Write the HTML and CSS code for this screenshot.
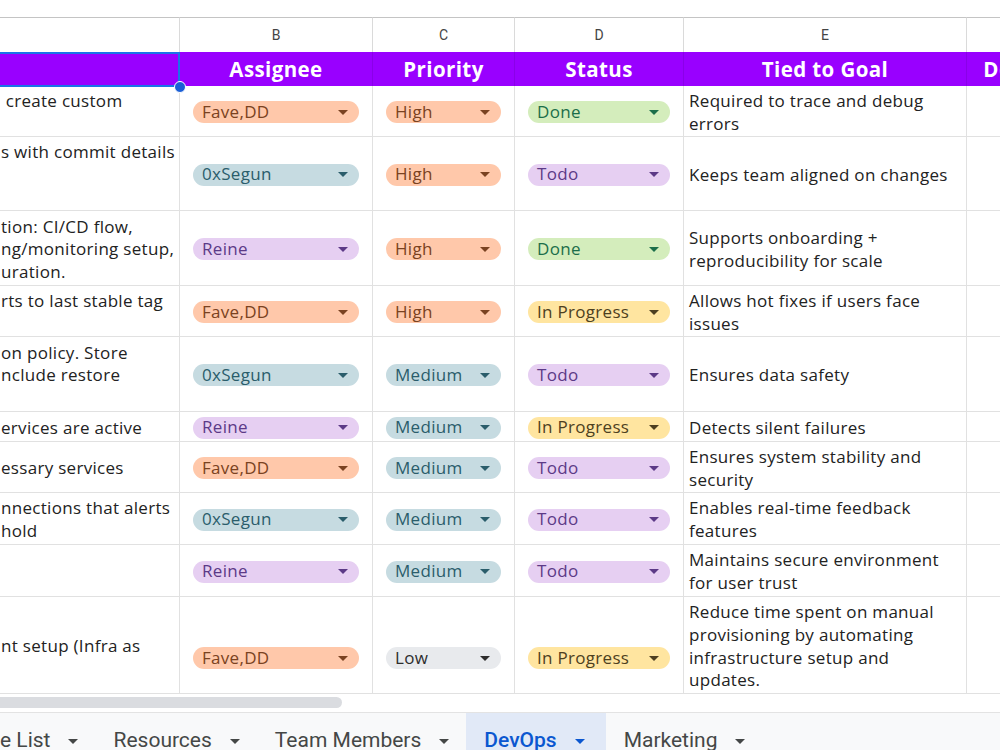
FILE: index.html
```html
<!DOCTYPE html>
<html lang="en">
<head>
  <meta charset="UTF-8">
  <meta name="viewport" content="width=device-width, initial-scale=1.0">
  <title>DevOps - Task Tracker</title>
  <link rel="stylesheet" href="styles.css">
</head>
<body>

  <div class="sheet">
    <div class="grid">
      <!-- Column letters -->
      <div class="letter"></div>
      <div class="letter">B</div>
      <div class="letter">C</div>
      <div class="letter">D</div>
      <div class="letter">E</div>
      <div class="letter"></div>

      <!-- Header row -->
      <div class="head selected"></div>
      <div class="head">Assignee</div>
      <div class="head">Priority</div>
      <div class="head">Status</div>
      <div class="head">Tied to Goal</div>
      <div class="head">Dependencies</div>

      <!-- Row 1 -->
      <div class="cell task">&nbsp;create custom<br>&nbsp;</div>
      <div class="cell pick"><span class="chip orange">Fave,DD</span></div>
      <div class="cell pick"><span class="chip orange">High</span></div>
      <div class="cell pick"><span class="chip green">Done</span></div>
      <div class="cell goal">Required to trace and debug<br>errors</div>
      <div class="cell"></div>

      <!-- Row 2 -->
      <div class="cell task">s with commit details<br>&nbsp;<br>&nbsp;</div>
      <div class="cell pick"><span class="chip teal">0xSegun</span></div>
      <div class="cell pick"><span class="chip orange">High</span></div>
      <div class="cell pick"><span class="chip purple">Todo</span></div>
      <div class="cell goal">Keeps team aligned on changes</div>
      <div class="cell"></div>

      <!-- Row 3 -->
      <div class="cell task">tion: CI/CD flow,<br>ng/monitoring setup,<br>uration.</div>
      <div class="cell pick"><span class="chip purple">Reine</span></div>
      <div class="cell pick"><span class="chip orange">High</span></div>
      <div class="cell pick"><span class="chip green">Done</span></div>
      <div class="cell goal">Supports onboarding +<br>reproducibility for scale</div>
      <div class="cell"></div>

      <!-- Row 4 -->
      <div class="cell task">rts to last stable tag<br>&nbsp;</div>
      <div class="cell pick"><span class="chip orange">Fave,DD</span></div>
      <div class="cell pick"><span class="chip orange">High</span></div>
      <div class="cell pick"><span class="chip yellow">In Progress</span></div>
      <div class="cell goal">Allows hot fixes if users face<br>issues</div>
      <div class="cell"></div>

      <!-- Row 5 -->
      <div class="cell task">on policy. Store<br>nclude restore<br>&nbsp;</div>
      <div class="cell pick"><span class="chip teal">0xSegun</span></div>
      <div class="cell pick"><span class="chip teal">Medium</span></div>
      <div class="cell pick"><span class="chip purple">Todo</span></div>
      <div class="cell goal">Ensures data safety</div>
      <div class="cell"></div>

      <!-- Row 6 -->
      <div class="cell task">ervices are active</div>
      <div class="cell pick"><span class="chip purple">Reine</span></div>
      <div class="cell pick"><span class="chip teal">Medium</span></div>
      <div class="cell pick"><span class="chip yellow">In Progress</span></div>
      <div class="cell goal">Detects silent failures</div>
      <div class="cell"></div>

      <!-- Row 7 -->
      <div class="cell task">essary services</div>
      <div class="cell pick"><span class="chip orange">Fave,DD</span></div>
      <div class="cell pick"><span class="chip teal">Medium</span></div>
      <div class="cell pick"><span class="chip purple">Todo</span></div>
      <div class="cell goal">Ensures system stability and<br>security</div>
      <div class="cell"></div>

      <!-- Row 8 -->
      <div class="cell task">nnections that alerts<br>hold</div>
      <div class="cell pick"><span class="chip teal">0xSegun</span></div>
      <div class="cell pick"><span class="chip teal">Medium</span></div>
      <div class="cell pick"><span class="chip purple">Todo</span></div>
      <div class="cell goal">Enables real-time feedback<br>features</div>
      <div class="cell"></div>

      <!-- Row 9 -->
      <div class="cell task"></div>
      <div class="cell pick"><span class="chip purple">Reine</span></div>
      <div class="cell pick"><span class="chip teal">Medium</span></div>
      <div class="cell pick"><span class="chip purple">Todo</span></div>
      <div class="cell goal">Maintains secure environment<br>for user trust</div>
      <div class="cell"></div>

      <!-- Row 10 -->
      <div class="cell task">nt setup (Infra as</div>
      <div class="cell pick low"><span class="chip orange">Fave,DD</span></div>
      <div class="cell pick low"><span class="chip gray">Low</span></div>
      <div class="cell pick low"><span class="chip yellow">In Progress</span></div>
      <div class="cell goal">Reduce time spent on manual<br>provisioning by automating<br>infrastructure setup and<br>updates.</div>
      <div class="cell"></div>
    </div>

    <div class="scrollbar">
      <div class="thumb"></div>
    </div>
  </div>

  <!-- Sheet tabs -->
  <div class="tabs">
    <div class="tab first">e List<span class="caret"></span></div>
    <div class="tab">Resources<span class="caret"></span></div>
    <div class="tab">Team Members<span class="caret"></span></div>
    <div class="tab active">DevOps<span class="caret"></span></div>
    <div class="tab">Marketing<span class="caret"></span></div>
  </div>

</body>
</html>
```

FILE: styles.css
```css
body {
  margin: 0;
  width: 1000px;
  height: 750px;
  overflow: hidden;
  background-color: #fff;
  font-family: "Open Sans", Arial, sans-serif;
  color: #222;
}

.sheet {
  padding-top: 17px;
  overflow: hidden;
}

.grid {
  display: grid;
  grid-template-columns: 180px 193px 142px 169px 283px 182px;
  grid-template-rows: 35px 34px 51px 74px 75px 51px 75px 30px 51px 52px 52px 97px;
  width: 1149px;
}

.grid > div {
  box-sizing: border-box;
  min-width: 0;
}

/* Column letters row */
.letter {
  display: flex;
  justify-content: center;
  align-items: center;
  border-top: 1px solid #c4c4c4;
  border-right: 1px solid #dadada;
  font-family: Roboto, Arial, sans-serif;
  font-size: 14px;
  color: #444;
}

/* Purple header row */
.head {
  display: flex;
  justify-content: center;
  align-items: center;
  background-color: #9900ff;
  border-right: 1px solid #8a00e8;
  color: #fff;
  font-size: 20.5px;
  font-weight: 700;
  letter-spacing: 0.4px;
  white-space: nowrap;
  overflow: hidden;
}

.head.selected {
  position: relative;
  overflow: visible;
}

.head.selected::before {
  content: "";
  position: absolute;
  top: 0;
  left: -2px;
  right: -1px;
  bottom: -1px;
  border: 2px solid #1a73e8;
}

.head.selected::after {
  content: "";
  position: absolute;
  right: -7px;
  bottom: -7px;
  width: 10px;
  height: 10px;
  border-radius: 50%;
  background-color: #1a5fd6;
  border: 1px solid #fff;
  z-index: 2;
}

/* Data cells */
.cell {
  display: flex;
  align-items: center;
  border-right: 1px solid #e1e1e1;
  border-bottom: 1px solid #e1e1e1;
  font-size: 17px;
  letter-spacing: 0.3px;
  line-height: 22.6px;
  white-space: nowrap;
  overflow: hidden;
}

.task {
  padding: 3px 0 0 1px;
}

.goal {
  padding: 3px 0 0 5px;
}

.pick {
  padding: 2px 13px 0 13px;
}

.pick.low {
  padding-top: 26px;
}

/* Dropdown chips */
.chip {
  flex: 1;
  display: flex;
  justify-content: space-between;
  align-items: center;
  height: 22px;
  padding: 0 11px 0 9px;
  border-radius: 11px;
}

.chip::after {
  content: "";
  border-left: 5px solid transparent;
  border-right: 5px solid transparent;
  border-top: 5px solid currentColor;
}

.orange { background-color: #ffc8aa; color: #7a4221; }
.teal   { background-color: #c6dbe1; color: #2a5d6b; }
.purple { background-color: #e6cff2; color: #5c3a87; }
.green  { background-color: #d4edbc; color: #1b6e4a; }
.yellow { background-color: #ffe5a0; color: #4d3f20; }
.gray   { background-color: #e8eaed; color: #2d2d2d; }

/* Horizontal scrollbar */
.scrollbar {
  height: 18px;
  padding-top: 3px;
  box-sizing: border-box;
}

.thumb {
  width: 342px;
  height: 11px;
  background-color: #dadce0;
  border-radius: 0 6px 6px 0;
}

/* Sheet tabs */
.tabs {
  display: flex;
  height: 48px;
  border-top: 1px solid #e3e3e3;
  background-color: #f8f9fa;
  font-family: Roboto, Arial, sans-serif;
  font-size: 21px;
  color: #444746;
}

.tab {
  display: flex;
  align-items: flex-start;
  height: 100%;
  padding: 13px 17px 0 18px;
  line-height: 28px;
  box-sizing: border-box;
}

.tab.first {
  padding-left: 0;
}

.tab.active {
  padding-right: 21px;
  background-color: #e1e9f7;
  color: #0b57d0;
  font-weight: 500;
}

.caret {
  margin: 13px 0 0 18px;
  border-left: 5px solid transparent;
  border-right: 5px solid transparent;
  border-top: 5px solid currentColor;
}
```
